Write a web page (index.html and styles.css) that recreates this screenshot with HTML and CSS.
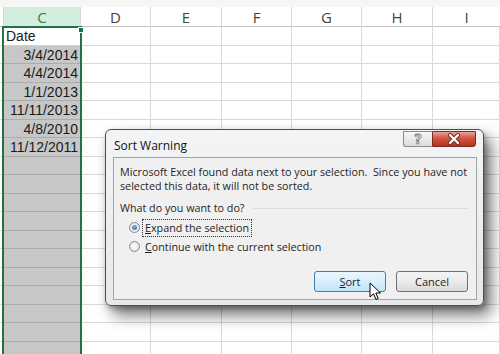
FILE: index.html
```html
<!DOCTYPE html>
<html lang="en">
<head>
    <meta charset="UTF-8">
    <title>Sort Warning</title>
    <link rel="stylesheet" href="styles.css">
</head>
<body>
<div class="sheet">
    <div class="strip"></div>
    <!-- worksheet grid, column B is only partly visible -->
    <table class="grid">
        <colgroup>
            <col class="w-b"><col class="w-c"><col class="w-d"><col class="w-e">
            <col class="w-f"><col class="w-g"><col class="w-h"><col class="w-i">
        </colgroup>
        <tr class="head"><th></th><th class="sel">C</th><th>D</th><th>E</th><th>F</th><th>G</th><th>H</th><th class="last">I</th></tr>
        <tr><td></td><td class="c top">Date</td><td></td><td></td><td></td><td></td><td></td><td></td></tr>
        <tr><td></td><td class="c num">3/4/2014</td><td></td><td></td><td></td><td></td><td></td><td></td></tr>
        <tr><td></td><td class="c num">4/4/2014</td><td></td><td></td><td></td><td></td><td></td><td></td></tr>
        <tr><td></td><td class="c num">1/1/2013</td><td></td><td></td><td></td><td></td><td></td><td></td></tr>
        <tr><td></td><td class="c num">11/11/2013</td><td></td><td></td><td></td><td></td><td></td><td></td></tr>
        <tr><td></td><td class="c num">4/8/2010</td><td></td><td></td><td></td><td></td><td></td><td></td></tr>
        <tr><td></td><td class="c num">11/12/2011</td><td></td><td></td><td></td><td></td><td></td><td></td></tr>
        <tr><td></td><td class="c"></td><td></td><td></td><td></td><td></td><td></td><td></td></tr>
        <tr><td></td><td class="c"></td><td></td><td></td><td></td><td></td><td></td><td></td></tr>
        <tr><td></td><td class="c"></td><td></td><td></td><td></td><td></td><td></td><td></td></tr>
        <tr><td></td><td class="c"></td><td></td><td></td><td></td><td></td><td></td><td></td></tr>
        <tr><td></td><td class="c"></td><td></td><td></td><td></td><td></td><td></td><td></td></tr>
        <tr><td></td><td class="c"></td><td></td><td></td><td></td><td></td><td></td><td></td></tr>
        <tr><td></td><td class="c"></td><td></td><td></td><td></td><td></td><td></td><td></td></tr>
        <tr><td></td><td class="c"></td><td></td><td></td><td></td><td></td><td></td><td></td></tr>
        <tr><td></td><td class="c"></td><td></td><td></td><td></td><td></td><td></td><td></td></tr>
        <tr><td></td><td class="c"></td><td></td><td></td><td></td><td></td><td></td><td></td></tr>
        <tr><td></td><td class="c"></td><td></td><td></td><td></td><td></td><td></td><td></td></tr>
    </table>

    <!-- green selection frame round column C -->
    <div class="selection"><span class="handle"></span></div>

    <!-- the dialog -->
    <div class="dialog">
        <div class="titlebar">
            <span class="title">Sort Warning</span>
            <div class="caption-btns">
                <span class="help">?</span>
                <span class="close">
                    <svg width="16" height="12" viewBox="0 0 16 12">
                        <path d="M4 2 L12 10 M12 2 L4 10" stroke="#6b2a22" stroke-width="4.2" stroke-linecap="round"/>
                        <path d="M4 2 L12 10 M12 2 L4 10" stroke="#fff" stroke-width="2.4" stroke-linecap="round"/>
                    </svg>
                </span>
            </div>
        </div>
        <div class="panel">
            <p class="msg">Microsoft Excel found data next to your selection.&nbsp; Since you have not selected this data, it will not be sorted.</p>
            <div class="question"><span>What do you want to do?</span><i></i></div>
            <div class="option"><span class="radio on"></span><span class="focus"><u>E</u>xpand the selection</span></div>
            <div class="option"><span class="radio"></span><span><u>C</u>ontinue with the current selection</span></div>
            <div class="buttons">
                <span class="btn default"><u>S</u>ort</span>
                <span class="btn">Cancel</span>
            </div>
        </div>
    </div>

    <svg class="cursor" width="13" height="20" viewBox="0 0 13 20">
        <path d="M1 1 L1 15 L4.5 11.8 L7 17.5 L9.2 16.5 L6.8 11 L11.5 11 Z" fill="#fff" stroke="#000" stroke-width="1"/>
    </svg>
</div>
</body>
</html>
```

FILE: styles.css
```css
* {
    margin: 0;
    padding: 0;
    box-sizing: border-box;
}

body {
    background: #fff;
    font-family: "Liberation Sans", Arial, sans-serif;
}

.sheet {
    width: 500px;
    height: 354px;
    position: relative;
    overflow: hidden;
    background: #fff;
}

.strip {
    height: 7px;
    background: #f6f6f6;
}

.grid {
    width: 500px;
    table-layout: fixed;
    border-collapse: separate;
    border-spacing: 0;
}

.w-b { width: 4px; }
.w-c { width: 77px; }
.w-d { width: 70px; }
.w-e { width: 71px; }
.w-f { width: 70px; }
.w-g { width: 70px; }
.w-h { width: 71px; }
.w-i { width: 67px; }

.grid th {
    height: 20px;
    padding: 0;
    font-family: "Open Sans", sans-serif;
    font-weight: normal;
    font-size: 15px;
    line-height: 18px;
    color: #444;
    text-align: center;
    background: #fff;
    border-right: 1px solid #dadada;
    border-bottom: 1px solid #c2c2c2;
}

.grid th.sel {
    background: #d3eddf;
    color: #2f7d52;
    border-bottom-color: #217346;
}

.grid th.last {
    border-right: 0;
}

.grid td {
    padding: 0 2px;
    font-size: 14px;
    line-height: 16px;
    color: #1a1a1a;
    white-space: nowrap;
    overflow: hidden;
    border-right: 1px solid #d9d9d9;
    border-bottom: 1px solid #d9d9d9;
}

.grid tr:nth-child(even) td { height: 19px; }
.grid tr:nth-child(odd) td { height: 18px; }

.grid td.c {
    background: #c7c7c7;
    border-bottom-color: #acacac;
}

.grid td.top {
    background: #fff;
    border-bottom-color: #d0d0d0;
}

.grid td.num {
    text-align: right;
}

.selection {
    position: absolute;
    left: 2px;
    top: 26px;
    width: 80px;
    height: 340px;
    border: 2px solid #217346;
}

.handle {
    position: absolute;
    right: -4px;
    top: -1px;
    width: 6px;
    height: 6px;
    background: #217346;
    border: 1px solid #fff;
}

/* dialog */
.dialog {
    position: absolute;
    left: 105px;
    top: 129px;
    width: 379px;
    height: 177px;
    padding: 0 6px 5px 7px;
    display: flex;
    flex-direction: column;
    border: 1px solid #4d4d4d;
    border-radius: 6px;
    background: linear-gradient(#f3f4f6, #e6e8eb);
    box-shadow: 7px 9px 16px rgba(0, 0, 0, 0.55), 2px 3px 5px rgba(0, 0, 0, 0.25);
    font-family: "Open Sans", sans-serif;
    color: #1e1e1e;
}

.titlebar {
    height: 27px;
    display: flex;
    justify-content: space-between;
    align-items: flex-start;
}

.title {
    font-size: 12px;
    line-height: 14px;
    margin-top: 9px;
    margin-left: 1px;
    color: #111;
}

.caption-btns {
    display: flex;
    margin-top: 1px;
    margin-right: 1px;
}

.help {
    width: 29px;
    height: 16px;
    border: 1px solid #8c8c8c;
    border-right: 0;
    border-radius: 0 0 0 3px;
    background: linear-gradient(#f6f6f6, #dcdcdc);
    font-size: 14px;
    font-weight: bold;
    line-height: 14px;
    text-align: center;
    color: #fff;
    -webkit-text-stroke: 0.8px #6e6e6e;
}

.close {
    width: 44px;
    height: 16px;
    border: 1px solid #7a2a20;
    border-radius: 0 0 3px 0;
    background: linear-gradient(#e9a497, #d0553f 45%, #b83320);
    display: flex;
    align-items: center;
    justify-content: center;
}

.panel {
    flex: 1;
    border: 1px solid #a3a3a3;
    background: #f0f0f0;
    padding: 7px 8px 7px 6px;
    display: flex;
    flex-direction: column;
    font-size: 10.75px;
    line-height: 14px;
}

.question {
    margin-top: 8px;
    display: flex;
    align-items: center;
}

.question i {
    flex: 1;
    height: 1px;
    margin-left: 8px;
    background: #dedede;
}

.option {
    display: flex;
    align-items: center;
    height: 19px;
    margin-left: 9px;
}

.question + .option {
    margin-top: 3px;
}

.radio {
    width: 11px;
    height: 11px;
    border-radius: 50%;
    border: 1px solid #8a8a8a;
    background: radial-gradient(circle, #fff, #dcdcdc);
    margin-right: 3px;
    position: relative;
}

.radio.on::after {
    content: "";
    position: absolute;
    left: 2px;
    top: 2px;
    width: 5px;
    height: 5px;
    border-radius: 50%;
    background: radial-gradient(circle at 40% 35%, #7cb8ee, #1f5fa8);
}

.option span:last-child {
    padding: 1px 2px;
}

.focus {
    outline: 1px dotted #333;
}

.buttons {
    margin-top: auto;
    display: flex;
    justify-content: flex-end;
    gap: 10px;
}

.btn {
    width: 72px;
    height: 21px;
    border: 1px solid #707070;
    border-radius: 3px;
    background: linear-gradient(#f3f3f3, #ebebeb 50%, #dadada);
    text-align: center;
    line-height: 19px;
    font-size: 11px;
}

.btn.default {
    border-color: #3c7fb1;
    background: linear-gradient(#eaf6fd, #d9effc 50%, #bee6fd);
}

.cursor {
    position: absolute;
    left: 369px;
    top: 282px;
}
```
